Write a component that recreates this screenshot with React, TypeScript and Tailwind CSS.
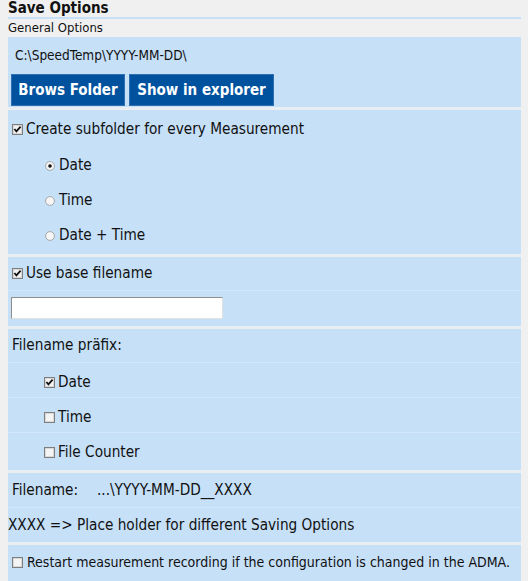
import * as React from "react";

const Check = ({ checked }: { checked?: boolean }) => (
  <svg width="11" height="11" viewBox="0 0 11 11" className="shrink-0">
    <rect x="0.5" y="0.5" width="10" height="10" fill="#f4f4f4" stroke="#7e7e7e" />
    <rect x="1.5" y="1.5" width="8" height="8" fill="none" stroke="#d8d8d8" />
    {checked && <path d="M2.4 5 L4.4 7.4 L8.6 2.6" fill="none" stroke="#111" strokeWidth="1.8" />}
  </svg>
);

const Radio = ({ checked }: { checked?: boolean }) => (
  <svg width="10" height="10" viewBox="0 0 10 10" className="shrink-0">
    <circle cx="5" cy="5" r="4.4" fill="#f6f6f6" stroke="#a0a0a0" strokeWidth="0.9" />
    {checked && <circle cx="5" cy="5" r="1.8" fill="#111" />}
  </svg>
);

const Row = ({ children, className }: { children: React.ReactNode; className?: string }) => (
  <div className={`flex items-center ${className || ""}`}>{children}</div>
);

export default function App() {
  return (
    <div
      className="w-[528px] h-[581px] overflow-hidden bg-[#f0f0f0] text-[#111] text-[15.2px]"
      style={{ fontFamily: "'DejaVu Sans Condensed', 'DejaVu Sans', sans-serif" }}
    >
      <div className="h-[17px] px-[8px] text-[15px] font-bold leading-[17px]">Save Options</div>
      <div className="ml-[8px] h-[2px] w-[513px] bg-[#c6e0f8]" />
      <div className="h-[18px] px-[8px] text-[13px] leading-[18px]">General Options</div>

      <div className="ml-[8px] flex w-[513px] flex-col gap-[3px] bg-[#e9eef3]">
        {/* folder */}
        <div className="h-[70px] bg-[#c6e0f8]">
          <Row className="h-[37px] pl-[7px] text-[13.5px]">C:\SpeedTemp\YYYY-MM-DD\</Row>
          <div className="flex gap-[4px] pl-[3px]">
            <button className="h-[32px] w-[114px] border border-[#2f6fb3] bg-[#00529f] text-[15px] font-bold text-white">
              Brows Folder
            </button>
            <button className="h-[32px] w-[145px] border border-[#2f6fb3] bg-[#00529f] text-[15px] font-bold text-white">
              Show in explorer
            </button>
          </div>
        </div>

        {/* subfolder */}
        <div className="h-[144px] bg-[#c6e0f8]">
          <Row className="h-[38px] gap-[3px] pl-[4px]">
            <Check checked />
            <span>Create subfolder for every Measurement</span>
          </Row>
          {[
            ["Date", true],
            ["Time", false],
            ["Date + Time", false],
          ].map(([label, on]) => (
            <Row key={label as string} className="h-[35px] gap-[4px] pl-[37px]">
              <Radio checked={on as boolean} />
              <span>{label as string}</span>
            </Row>
          ))}
        </div>

        {/* base filename */}
        <div className="h-[69px] bg-[#c6e0f8]">
          <Row className="h-[34px] gap-[3px] border-b border-[#d2e7fb] pl-[4px]">
            <Check checked />
            <span>Use base filename</span>
          </Row>
          <div className="pl-[3px] pt-[6px]">
            <div className="h-[22px] w-[212px] border border-t-[#8e8e8e] border-l-[#8e8e8e] border-r-[#e0e0e0] border-b-[#e0e0e0] bg-white" />
          </div>
        </div>

        {/* prefix */}
        <div className="h-[141px] bg-[#c6e0f8]">
          <Row className="h-[34px] border-b border-[#d2e7fb] pl-[4px]">Filename präfix:</Row>
          {[
            ["Date", true],
            ["Time", false],
            ["File Counter", false],
          ].map(([label, on], i) => (
            <Row
              key={label as string}
              className={`h-[35px] gap-[3px] pl-[36px] pt-[4px] ${i < 2 ? "border-b border-[#d2e7fb]" : ""}`}
            >
              <Check checked={on as boolean} />
              <span>{label as string}</span>
            </Row>
          ))}
        </div>

        {/* result */}
        <div className="h-[69px] bg-[#c6e0f8]">
          <Row className="h-[35px] border-b border-[#d2e7fb] pl-[4px]">
            <span className="w-[85px]">Filename:</span>
            <span>...\YYYY-MM-DD__XXXX</span>
          </Row>
          <Row className="h-[34px]">XXXX =&gt; Place holder for different Saving Options</Row>
        </div>

        {/* restart */}
        <div className="h-[40px] bg-[#c6e0f8]">
          <Row className="h-[34px] gap-[4px] pl-[4px] text-[14px]">
            <Check />
            <span>Restart measurement recording if the configuration is changed in the ADMA.</span>
          </Row>
        </div>
      </div>
    </div>
  );
}
